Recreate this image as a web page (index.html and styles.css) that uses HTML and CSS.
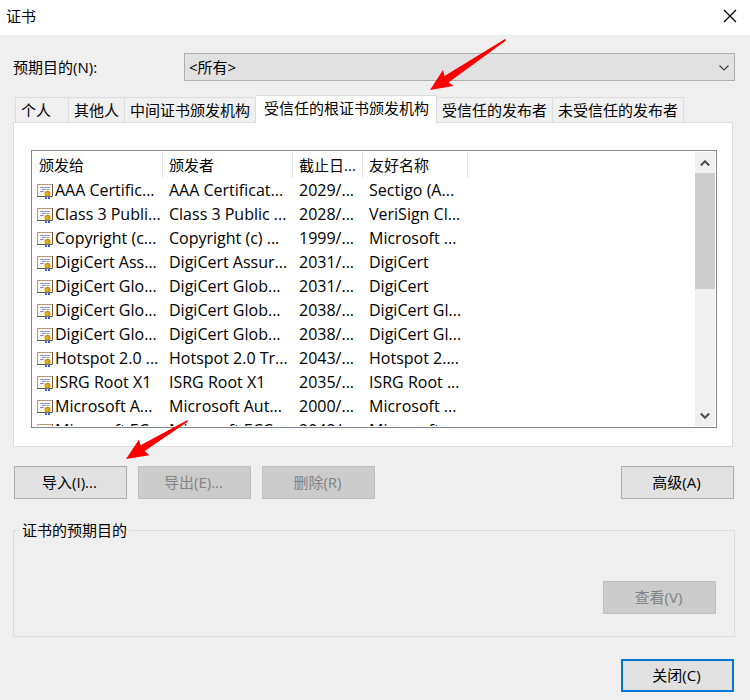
FILE: index.html
```html
<!DOCTYPE html>
<html lang="zh-CN">
<head>
<meta charset="utf-8">
<title>证书</title>
<link rel="stylesheet" href="styles.css">
</head>
<body>
<svg class="defs" aria-hidden="true">
  <symbol id="cert" viewBox="0 0 16 16">
    <path fill="#fbfaf4" d="M0 0h16v13H0z"/>
    <path fill="none" stroke="#b09a78" d="M.5 13V.500H16"/>
    <path fill="none" stroke="#6f5a3c" d="M0 12.500h15.500V0"/>
    <path stroke="#9094c8" d="M3 3.500h10M5 5.500h4M10 5.500h2M3 7.500h4"/>
    <path fill="#2a62d8" d="M8 11h2v4H8zM11 11h2v4h-2z"/>
    <circle cx="10.500" cy="9.800" r="3" fill="#d0940c"/>
    <circle cx="10.500" cy="9.800" r="1.200" fill="#efb92c"/>
  </symbol>
</svg>
<header class="titlebar">
  <h1>证书</h1>
  <button class="close" aria-label="关闭窗口"><svg width="14" height="14" viewBox="0 0 14 14"><path d="M1 1l12 12M13 1 1 13" stroke="#000" stroke-width="1.200"/></svg></button>
</header>
<main>
  <div class="purpose">
    <label for="purpose">预期目的(N):</label>
    <div class="combo">
      <select id="purpose"><option>&lt;所有&gt;</option></select>
      <svg width="10" height="6" viewBox="0 0 10 6"><path d="M.5.500 5 5 9.500.500" fill="none" stroke="#444" stroke-width="1.200"/></svg>
    </div>
  </div>
  <div class="tabs" role="tablist">
    <button role="tab">个人</button>
    <button role="tab">其他人</button>
    <button role="tab">中间证书颁发机构</button>
    <button role="tab" class="active" aria-selected="true">受信任的根证书颁发机构<svg class="arrow" width="76" height="52" viewBox="0 0 76 52"><path fill="#f00" d="M0 51 13 31 14.500 37 75 0 76 1.500 18.700 43.300 23.300 47z"/></svg></button>
    <button role="tab">受信任的发布者</button>
    <button role="tab">未受信任的发布者</button>
  </div>
  <section class="panel" role="tabpanel">
    <div class="list">
      <div class="viewport">
        <table>
          <colgroup><col class="c1"><col class="c2"><col class="c3"><col class="c4"></colgroup>
          <thead><tr><th>颁发给</th><th>颁发者</th><th>截止日...</th><th>友好名称</th></tr></thead>
          <tbody>
            <tr><td><svg class="cert"><use href="#cert"/></svg>AAA Certific...</td><td>AAA Certificat...</td><td>2029/...</td><td>Sectigo (A...</td></tr>
            <tr><td><svg class="cert"><use href="#cert"/></svg>Class 3 Publi...</td><td>Class 3 Public ...</td><td>2028/...</td><td>VeriSign Cl...</td></tr>
            <tr><td><svg class="cert"><use href="#cert"/></svg>Copyright (c...</td><td>Copyright (c) ...</td><td>1999/...</td><td>Microsoft ...</td></tr>
            <tr><td><svg class="cert"><use href="#cert"/></svg>DigiCert Ass...</td><td>DigiCert Assur...</td><td>2031/...</td><td>DigiCert</td></tr>
            <tr><td><svg class="cert"><use href="#cert"/></svg>DigiCert Glo...</td><td>DigiCert Glob...</td><td>2031/...</td><td>DigiCert</td></tr>
            <tr><td><svg class="cert"><use href="#cert"/></svg>DigiCert Glo...</td><td>DigiCert Glob...</td><td>2038/...</td><td>DigiCert Gl...</td></tr>
            <tr><td><svg class="cert"><use href="#cert"/></svg>DigiCert Glo...</td><td>DigiCert Glob...</td><td>2038/...</td><td>DigiCert Gl...</td></tr>
            <tr><td><svg class="cert"><use href="#cert"/></svg>Hotspot 2.0 ...</td><td>Hotspot 2.0 Tr...</td><td>2043/...</td><td>Hotspot 2....</td></tr>
            <tr><td><svg class="cert"><use href="#cert"/></svg>ISRG Root X1</td><td>ISRG Root X1</td><td>2035/...</td><td>ISRG Root ...</td></tr>
            <tr><td><svg class="cert"><use href="#cert"/></svg>Microsoft A...</td><td>Microsoft Aut...</td><td>2000/...</td><td>Microsoft ...</td></tr>
            <tr><td><svg class="cert"><use href="#cert"/></svg>Microsoft EC...</td><td>Microsoft ECC...</td><td>2042/...</td><td>Microsoft ...</td></tr>
          </tbody>
        </table>
      </div>
      <div class="scrollbar">
        <button aria-label="向上滚动"><svg width="10" height="8" viewBox="0 0 10 8"><path d="M.8 6.500 5 2.200 9.200 6.500" fill="none" stroke="#505050" stroke-width="2"/></svg></button>
        <div class="track"><div class="thumb"></div></div>
        <button aria-label="向下滚动"><svg width="10" height="8" viewBox="0 0 10 8"><path d="M.8 1.500 5 5.800 9.200 1.500" fill="none" stroke="#505050" stroke-width="2"/></svg></button>
      </div>
    </div>
  </section>
  <div class="actions">
    <button class="btn">导入(I)...<svg class="arrow" width="62" height="40" viewBox="0 0 62 40"><path fill="#f00" d="M0 39 13 19.500 14.500 25.300 61.500 0 62 1.500 18.700 31 23.300 35.300z"/></svg></button>
    <button class="btn" disabled>导出(E)...</button>
    <button class="btn" disabled>删除(R)</button>
    <button class="btn advanced">高级(A)</button>
  </div>
  <fieldset>
    <legend>证书的预期目的</legend>
    <button class="btn" disabled>查看(V)</button>
  </fieldset>
  <footer><button class="btn primary">关闭(C)</button></footer>
</main>
</body>
</html>
```
FILE: styles.css
```css
* { box-sizing: border-box; }
body {
  margin: 0;
  min-height: 100vh;
  background: #efefef;
  color: #000;
  font: 15px/24px "Open Sans", "Noto Sans CJK SC", sans-serif;
}
button, select { font: inherit; color: inherit; margin: 0; }
svg { display: block; }
.defs { position: absolute; width: 0; height: 0; }
.titlebar {
  display: flex;
  justify-content: space-between;
  align-items: center;
  height: 35px;
  padding: 0 6px 3px;
  background: #fff;
}
h1 { margin: 0; font-size: 15px; font-weight: 400; }
.close { border: 0; background: none; padding: 7px; }
main { padding: 18px 15px 8px 13px; }
.purpose { display: flex; align-items: center; }
.purpose label { width: 171px; }
.combo { position: relative; flex: 1; }
.combo select {
  display: block;
  width: 100%;
  height: 28px;
  padding: 0 4px;
  border: 1px solid #adadad;
  border-radius: 0;
  background: #e1e1e1;
  appearance: none;
}
.combo svg { position: absolute; right: 6px; top: 12px; pointer-events: none; }
.tabs {
  display: flex;
  align-items: flex-end;
  height: 28px;
  margin: 14px 0 -1px 2px;
}
.tabs button {
  height: 26px;
  padding: 0 5px;
  border: 1px solid #dcdcdc;
  border-left-width: 0;
  background: #f0f0f0;
  white-space: nowrap;
}
.tabs button:first-child { border-left-width: 1px; padding: 0 17px 0 5px; }
.tabs .active {
  position: relative;
  height: 28px;
  padding: 0 7px 3px 8px;
  border-bottom: 0;
  background: #fff;
}
.arrow { position: absolute; }
.active .arrow { left: 174px; top: -57px; z-index: 1; }
.panel {
  margin-right: 2px;
  padding: 27px 15px 18px 17px;
  border: 1px solid #dcdcdc;
  background: #fff;
}
.list {
  display: flex;
  height: 278px;
  padding: 1px;
  border: 1px solid #828790;
}
.viewport { flex: 1; overflow: hidden; }
table { table-layout: fixed; width: 435px; border-collapse: separate; border-spacing: 0; }
.c1, .c2 { width: 130px; }
.c3 { width: 70px; }
.c4 { width: 105px; }
th, td {
  height: 24px;
  padding: 0 0 0 6px;
  text-align: left;
  font-weight: 400;
  white-space: nowrap;
}
th { height: 26px; border-right: 1px solid #e5e5e5; }
td { font-size: 16px; }
td:first-child { padding-left: 4px; }
.cert { display: inline-block; width: 16px; height: 16px; margin-right: 2px; vertical-align: -4px; }
.scrollbar { display: flex; flex-direction: column; width: 20px; background: #f0f0f0; }
.scrollbar button {
  display: flex;
  justify-content: center;
  align-items: center;
  height: 21px;
  padding: 0;
  border: 0;
  background: none;
}
.track { flex: 1; }
.thumb { height: 50%; background: #cdcdcd; }
.actions { display: flex; gap: 11px; margin: 19px 0 0; padding: 0 1px; }
.btn {
  position: relative;
  width: 113px;
  height: 33px;
  padding: 0 2px 2px 0;
  border: 1px solid #adadad;
  background: #e1e1e1;
}
.btn:disabled { border-color: #bfbfbf; background: #ccc; color: #838383; }
.btn .arrow { left: 111px; top: -47px; }
.advanced { margin-left: auto; }
fieldset {
  display: flex;
  justify-content: flex-end;
  margin: 19px 0 0;
  padding: 39px 18px 22px 6px;
  border: 1px solid #dcdcdc;
}
legend { padding: 0 2px; }
footer { display: flex; justify-content: flex-end; margin-top: 22px; padding-right: 1px; }
.primary { border: 2px solid #0078d7; }
```
